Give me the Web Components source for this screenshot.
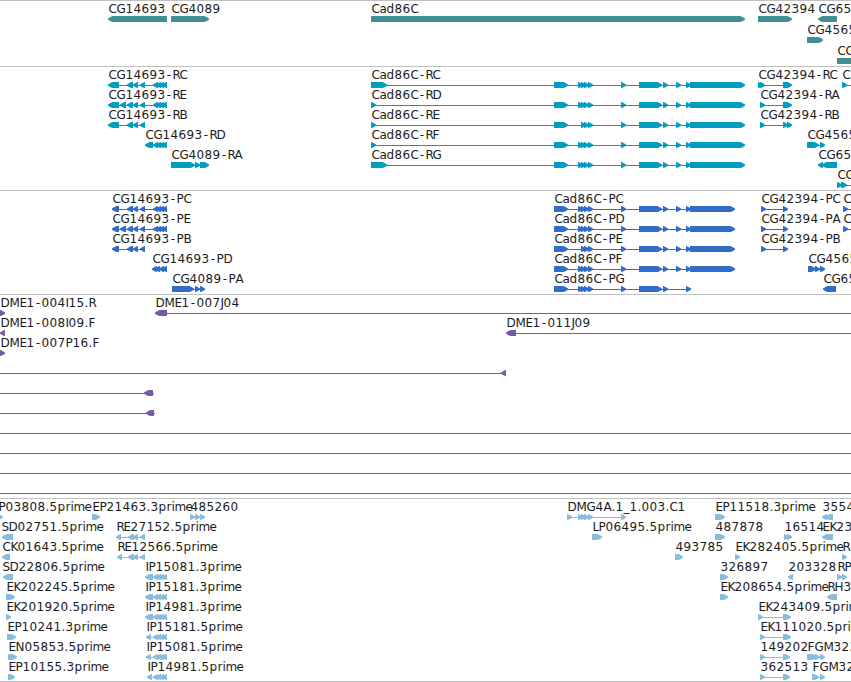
<!DOCTYPE html>
<html lang="en">
<head>
<meta charset="utf-8">
<title>Genome tracks</title>
<style>
  body {
    margin: 0;
    background: #fff;
    overflow: hidden;
  }
</style>
</head>
<body>
<genome-browser></genome-browser>

<script>
const SVG_NS = 'http://www.w3.org/2000/svg';

// whole pixel advances for the label characters
const ADVANCE = {
  A: 8, B: 8, C: 8, D: 9, E: 7, F: 7, G: 9, H: 9, I: 3, J: 3, K: 7, L: 6,
  M: 10, N: 9, P: 7, R: 7, S: 7, '-': 7, '.': 4, _: 6,
  a: 7, d: 8, p: 8, r: 5, i: 3, m: 11, e: 7,
};

const featureTemplate = document.createElement('template');
featureTemplate.innerHTML = `
  <style>
    :host {
      display: block;
      position: absolute;
      top: 0;
    }
    svg {
      display: block;
      overflow: visible;
    }
    text {
      font-family: 'DejaVu Sans', sans-serif;
      font-size: 12px;
      font-kerning: none;
      fill: #1c1c1c;
    }
    .shape {
      fill: var(--track-color);
    }
  </style>
  <svg width="1" height="20"></svg>
`;

// One feature: label on top, blocks with arrow heads joined by a line.
class GenomeFeature extends HTMLElement {
  constructor() {
    super();
    this.attachShadow({ mode: 'open' });
    this.shadowRoot.appendChild(featureTemplate.content.cloneNode(true));
    this.svg = this.shadowRoot.querySelector('svg');
  }

  connectedCallback() {
    this.start = Number(this.getAttribute('start'));
    this.style.left = `${this.start}px`;
    const blocks = (this.getAttribute('blocks') || '')
      .split(' ')
      .filter(Boolean)
      .map((b) => b.split(':').map((n) => Number(n) - this.start));

    this.drawLine(blocks);
    blocks.forEach(([from, to]) => this.drawBlock(from, to));
    this.drawLabel(this.getAttribute('label'));
  }

  add(name, attrs) {
    const el = document.createElementNS(SVG_NS, name);
    Object.keys(attrs).forEach((key) => el.setAttribute(key, attrs[key]));
    this.svg.appendChild(el);
    return el;
  }

  drawLine(blocks) {
    let from = blocks.length ? blocks[0][0] : 0;
    let to = blocks.length ? blocks[blocks.length - 1][1] : 0;
    if (this.hasAttribute('line')) {
      [from, to] = this.getAttribute('line').split(':').map((n) => Number(n) - this.start);
    } else if (blocks.length < 2) {
      return;
    }
    this.add('rect', { class: 'shape', x: from, y: 18, width: to - from, height: 1 });
  }

  drawBlock(from, to) {
    const left = this.getAttribute('strand') === '-';
    const tip = left ? from : to;
    const base = left ? to : from;
    // step back from the tip, towards the base
    const back = (n) => (left ? tip + n : tip - n);
    const head = Math.min(4.5, to - from);
    const points = [
      [base, 15], [back(head), 15], [back(2.5), 16], [tip, 17.6],
      [tip, 18.7], [back(2.5), 20.2], [back(head), 21], [base, 21],
    ].join(' ');
    this.add('polygon', { class: 'shape', points });
  }

  drawLabel(label) {
    if (!label) return;
    let x = 0.5;
    const xs = [...label].map((ch) => {
      const at = ch === '-' ? x + 1.2 : x;
      x += ADVANCE[ch] || 8;
      return at;
    });
    this.add('text', { x: xs.join(' '), y: 12 }).textContent = label;
  }
}

class TrackRow extends HTMLElement {
  constructor() {
    super();
    this.attachShadow({ mode: 'open' });
    this.shadowRoot.innerHTML = `
      <style>
        :host {
          display: block;
          position: relative;
          height: var(--row-height, 20px);
        }
      </style>
      <slot></slot>
    `;
  }
}

class GenomeTrack extends HTMLElement {
  constructor() {
    super();
    this.attachShadow({ mode: 'open' });
    this.shadowRoot.innerHTML = `
      <style>
        :host {
          display: flex;
          flex-direction: column;
          border-top: 1px solid #c0c0c0;
          padding-bottom: 3px;
        }
        :host([kind='gene']) {
          --track-color: #408f94;
          --row-height: 21px;
          padding-bottom: 2px;
        }
        :host([kind='transcript']) { --track-color: #009dbf; }
        :host([kind='cds']) { --track-color: #326ccb; }
        :host([kind='bac']) { --track-color: #7759a6; }
        :host([kind='est']) {
          --track-color: #89bddd;
          padding-bottom: 2px;
          border-bottom: 1px solid #c0c0c0;
        }
      </style>
      <slot></slot>
    `;
  }
}

const CLUSTER = '153:158 156:161 159:164 162:167';
const MID = '127:133 133:138 140:145';
const CAD4 = '578:583 581:586 584:589 588:593';
const CAD3 = '581:586 584:589 588:593';
const CAD_TAIL = '621:626 639:662 663:668 676:681 686:691';
const IP = `145:153 ${CLUSTER}`;

// [label, start, strand, blocks, line]
const TRACKS = [
  {
    kind: 'gene',
    rows: [
      [
        ['CG14693', 108, '-', '108:167'],
        ['CG4089', 171, '+', '171:209'],
        ['Cad86C', 371, '+', '371:745'],
        ['CG42394', 758, '+', '758:792'],
        ['CG65', 818, '-', '818:837'],
      ],
      [['CG4565', 807, '+', '807:823']],
      [['CG', 837, '+', '837:870']],
    ],
  },
  {
    kind: 'transcript',
    rows: [
      [
        ['CG14693-RC', 108, '-', `108:119 ${MID} ${CLUSTER}`],
        ['Cad86C-RC', 371, '+', `371:387 554:568 ${CAD4} ${CAD_TAIL} 690:745`],
        ['CG42394-RC', 758, '+', '758:763 760:765 783:792'],
        ['C', 842, '+', '842:847', '842:851'],
      ],
      [
        ['CG14693-RE', 108, '-', `108:119 120:126 ${MID} ${CLUSTER}`],
        ['Cad86C-RD', 371, '+', `371:376 554:568 ${CAD4} ${CAD_TAIL} 690:745`],
        ['CG42394-RA', 760, '+', '760:765 783:792'],
      ],
      [
        ['CG14693-RB', 108, '-', `108:119 ${MID}`],
        ['Cad86C-RE', 371, '+', `371:376 554:568 ${CAD3} ${CAD_TAIL} 690:745`],
        ['CG42394-RB', 760, '+', '760:765 783:788 787:792'],
      ],
      [
        ['CG14693-RD', 145, '-', IP],
        ['Cad86C-RF', 371, '+', `371:376 554:568 ${CAD4} ${CAD_TAIL} 690:745`],
        ['CG4565', 807, '+', '807:819 820:825'],
      ],
      [
        ['CG4089-RA', 171, '+', '171:195 195:200 200:209'],
        ['Cad86C-RG', 371, '+', `371:387 554:568 ${CAD4} ${CAD_TAIL} 690:745`],
        ['CG65', 818, '-', '818:823 822:837'],
      ],
      [['CG', 837, '+', '837:842 841:847', '837:851']],
    ],
  },
  {
    kind: 'cds',
    rows: [
      [
        ['CG14693-PC', 112, '-', `112:119 ${MID} ${CLUSTER}`],
        ['Cad86C-PC', 554, '+', `554:568 ${CAD4} ${CAD_TAIL} 690:735`],
        ['CG42394-PC', 761, '+', '761:766 783:788'],
        ['C', 843, '+', '843:848', '843:851'],
      ],
      [
        ['CG14693-PE', 112, '-', `112:119 120:126 ${MID} ${CLUSTER}`],
        ['Cad86C-PD', 554, '+', `554:568 ${CAD4} ${CAD_TAIL} 690:735`],
        ['CG42394-PA', 761, '+', '761:766 783:788'],
        ['C', 843, '+', '843:848', '843:851'],
      ],
      [
        ['CG14693-PB', 112, '-', `112:119 ${MID}`],
        ['Cad86C-PE', 554, '+', `554:568 ${CAD3} ${CAD_TAIL} 690:735`],
        ['CG42394-PB', 761, '+', '761:766 783:788'],
      ],
      [
        ['CG14693-PD', 152, '-', '152:157 155:160 159:164 162:167'],
        ['Cad86C-PF', 554, '+', `554:568 ${CAD4} ${CAD_TAIL} 690:735`],
        ['CG4565', 808, '+', '808:816 815:820 820:825'],
      ],
      [
        ['CG4089-PA', 172, '+', '172:194 195:200 200:205'],
        ['Cad86C-PG', 554, '+', `554:568 ${CAD4} 621:626 639:662 663:668 686:691`],
        ['CG65', 823, '-', '823:836'],
      ],
    ],
  },
  {
    kind: 'bac',
    rows: [
      [
        ['DME1-004I15.R', 0, '+', '0:5'],
        ['DME1-007J04', 155, '-', '155:167', '155:851'],
      ],
      [
        ['DME1-008I09.F', 0, '-', '0:5'],
        ['DME1-011J09', 506, '-', '506:516', '506:851'],
      ],
      [['DME1-007P16.F', 0, '+', '0:5']],
      [['', 0, '-', '501:506', '0:506']],
      [['', 0, '-', '144:153', '0:154']],
      [['', 0, '-', '146:154', '0:155']],
      [['', 0, '-', '', '0:851']],
      [['', 0, '-', '', '0:851']],
      [['', 0, '-', '', '0:851']],
      [['', 0, '-', '', '0:851']],
    ],
  },
  {
    kind: 'est',
    rows: [
      [
        ['P03808.5prime', -2, '+', '-2:3'],
        ['EP21463.3prime', 92, '+', '92:100'],
        ['485260', 190, '+', '190:195 195:200 200:205'],
        ['DMG4A.1_1.003.C1', 567, '+', `567:572 ${CAD4} 621:626`],
        ['EP11518.3prime', 715, '+', '715:725'],
        ['3554', 822, '-', '822:827 825:833'],
      ],
      [
        ['SD02751.5prime', 1, '-', '2:13'],
        ['RE27152.5prime', 116, '-', '116:121 128:134 133:138 140:145'],
        ['LP06495.5prime', 592, '+', '592:602'],
        ['487878', 715, '+', '715:725'],
        ['16514', 784, '+', '784:789 787:792'],
        ['EK23', 822, '-', '822:833'],
      ],
      [
        ['CK01643.5prime', 2, '-', '2:10'],
        ['RE12566.5prime', 117, '-', '117:122 128:134 133:138 140:145'],
        ['493785', 675, '+', '675:683'],
        ['EK282405.5prime', 735, '+', '735:740'],
        ['R', 842, '+', '842:847'],
      ],
      [
        ['SD22806.5prime', 2, '-', '3:13'],
        ['IP15081.3prime', 145, '-', IP],
        ['326897', 720, '+', '720:728'],
        ['203328', 788, '-', '788:793'],
        ['RP', 837, '+', '837:842 842:847'],
      ],
      [
        ['EK202245.5prime', 6, '+', '6:15'],
        ['IP15181.3prime', 145, '-', IP],
        ['EK208654.5prime', 720, '+', '720:728'],
        ['RH3', 827, '-', '827:837'],
      ],
      [
        ['EK201920.5prime', 6, '+', '6:11'],
        ['IP14981.3prime', 145, '-', IP],
        ['EK243409.5prime', 758, '+', '758:763 783:791'],
      ],
      [
        ['EP10241.3prime', 7, '+', '7:16'],
        ['IP15181.5prime', 146, '-', `146:151 ${CLUSTER}`],
        ['EK111020.5prime', 760, '+', '760:765 783:791'],
      ],
      [
        ['EN05853.5prime', 8, '+', '8:17'],
        ['IP15081.5prime', 146, '-', `146:151 ${CLUSTER}`],
        ['149202', 760, '+', '760:765 783:790'],
        ['FGM323', 807, '+', '807:817 815:820 820:825'],
      ],
      [
        ['EP10155.3prime', 8, '+', '8:15'],
        ['IP14981.5prime', 147, '-', `147:152 ${CLUSTER}`],
        ['362513', 760, '+', '760:765 783:790'],
        ['FGM32', 812, '+', '812:819 820:825'],
      ],
    ],
  },
];

class GenomeBrowser extends HTMLElement {
  constructor() {
    super();
    this.attachShadow({ mode: 'open' });
    this.shadowRoot.innerHTML = `
      <style>
        :host {
          display: flex;
          flex-direction: column;
          width: 851px;
          height: 682px;
          overflow: hidden;
          background: #fff;
        }
      </style>
    `;
  }

  connectedCallback() {
    TRACKS.forEach(({ kind, rows }) => {
      const track = document.createElement('genome-track');
      track.setAttribute('kind', kind);
      rows.forEach((features) => {
        const row = document.createElement('track-row');
        features.forEach(([label, start, strand, blocks, line]) => {
          const feature = document.createElement('genome-feature');
          feature.setAttribute('label', label);
          feature.setAttribute('start', start);
          feature.setAttribute('strand', strand);
          feature.setAttribute('blocks', blocks);
          if (line) feature.setAttribute('line', line);
          row.appendChild(feature);
        });
        track.appendChild(row);
      });
      this.shadowRoot.appendChild(track);
    });
  }
}

window.customElements.define('genome-feature', GenomeFeature);
window.customElements.define('track-row', TrackRow);
window.customElements.define('genome-track', GenomeTrack);
window.customElements.define('genome-browser', GenomeBrowser);
</script>
</body>
</html>
